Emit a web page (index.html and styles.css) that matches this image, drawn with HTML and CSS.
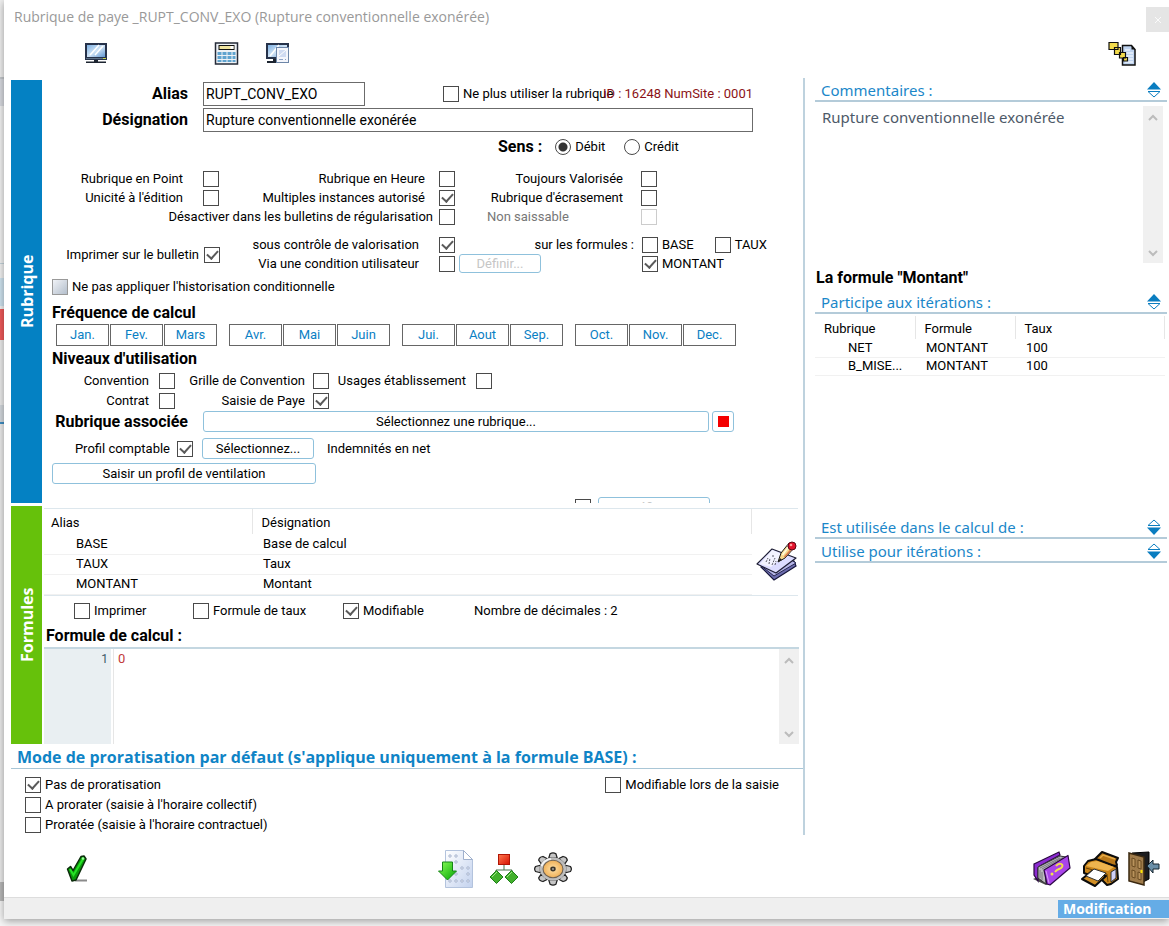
FILE: index.html
```html
<!DOCTYPE html>
<html lang="fr">
<head>
<meta charset="utf-8">
<title>Rubrique de paye</title>
<link rel="stylesheet" href="styles.css">
</head>
<body>
<div class="backdrop"></div>
<div class="window">
  <header class="titlebar">
    <h1 class="title">Rubrique de paye _RUPT_CONV_EXO (Rupture conventionnelle exonérée)</h1>
    <button class="close" type="button" aria-label="Fermer"><svg width="8" height="8" viewBox="0 0 8 8"><path d="M1 1l6 6M7 1l-6 6" stroke="#fafafa" fill="none"/></svg></button>
  </header>

  <nav class="toolbar">
    <button class="icon" type="button" aria-label="Écran">
      <svg width="24" height="22" viewBox="0 0 24 22"><defs><linearGradient id="scr" x1="0" y1="0" x2="1" y2="1"><stop offset="0" stop-color="#7fb2e4"/><stop offset=".5" stop-color="#cfe3f6"/><stop offset="1" stop-color="#5f95d0"/></linearGradient></defs><rect x="1" y="1" width="22" height="17" fill="#26324a"/><rect x="3" y="3" width="18" height="12" fill="url(#scr)"/><path d="M6 13l9-10M11 13l8-9" stroke="#fff" stroke-width="1.5"/><path d="M2 16.500h17" stroke="#5d7186"/><rect x="19" y="16" width="3" height="1" fill="#c5d64a"/><path d="M10 18h4v1.500h-4zM2 19.500h20v1.500H2z" fill="#1c2430"/></svg>
    </button>
    <button class="icon icon-calc" type="button" aria-label="Calculatrice">
      <svg width="25" height="23" viewBox="0 0 24 23"><rect x="1" y="1" width="22" height="21" fill="#eef2f6" stroke="#252b38" stroke-width="1.500"/><rect x="4.500" y="3.500" width="15" height="4" fill="#f0e6a0" stroke="#111"/><rect x="16" y="4" width="3" height="3" fill="#fff"/><g fill="#5fa3cf"><path d="M3 10h4v3H3zM8 10h4v3H8zM13 10h4v3h-4zM18 10h3v3h-3zM3 14h4v3H3zM8 14h4v3H8zM13 14h4v3h-4zM18 14h3v3h-3zM3 18h4v2H3zM8 18h4v2H8zM13 18h4v2h-4zM18 18h3v2h-3z"/></g></svg>
    </button>
    <button class="icon" type="button" aria-label="Aperçu">
      <svg width="25" height="22" viewBox="0 0 25 22"><rect x="1" y="1" width="23" height="16" fill="#26324a"/><rect x="3" y="3" width="19" height="12" fill="url(#scr)"/><path d="M5 14l9-11" stroke="#fff" stroke-width="1.500"/><path d="M8 17h4v2H8zM2 19h10v2H2z" fill="#1c2430"/><rect x="11.500" y="5.500" width="12" height="15" fill="#f4f6fc" stroke="#6d86a8"/><path d="M14 8h7v7h-7z" fill="#cfdbf2"/><path d="M14 14l7-6" stroke="#fff"/><path d="M14 17.500h4M20 17.500h1" stroke="#8ea4c8"/></svg>
    </button>
    <button class="icon icon-end" type="button" aria-label="Dépendances">
      <svg width="28" height="25" viewBox="0 0 28 25"><path d="M14.500 4.500h9l3.500 4v15.500h-12.500z" fill="#bfd3ef" stroke="#111" stroke-width="1.500"/><path d="M23.500 4.500v4h4z" fill="#111"/><path d="M17 9h5M17 12h8M17 15h8M17 18h8M17 21h8" stroke="#eaf2fc" stroke-width="1.500"/><g fill="#f4dc4c" stroke="#111" stroke-width="1.200"><path d="M1 1.500h9v7H1zM6.500 6.500h6v7h-6zM11.500 11.500h6v5.500h-6zM15.500 16.500h4v3.500h-4z"/></g></svg>
    </button>
  </nav>

  <main class="main">
    <div class="left">
      <section class="section section-rubrique">
        <h2 class="tab tab-blue">Rubrique</h2>
        <form class="panel">
          <div class="field">
            <label class="caption" for="alias">Alias</label>
            <div class="field-body">
              <input class="text text-short" id="alias" value="RUPT_CONV_EXO">
              <label class="choice choice-retire"><input class="check" type="checkbox">Ne plus utiliser la rubrique</label>
              <span class="ident">ID : 16248 NumSite : 0001</span>
            </div>
          </div>
          <div class="field">
            <label class="caption" for="designation">Désignation</label>
            <div class="field-body"><input class="text" id="designation" value="Rupture conventionnelle exonérée"></div>
          </div>
          <div class="sens" role="radiogroup" aria-labelledby="sens">
            <span class="bold" id="sens">Sens :</span>
            <label class="choice"><input class="radio" type="radio" name="sens" checked>Débit</label>
            <label class="choice choice-credit"><input class="radio" type="radio" name="sens">Crédit</label>
          </div>

          <div class="options">
            <label for="c1">Rubrique en Point</label><input class="check" id="c1" type="checkbox">
            <label for="c2">Rubrique en Heure</label><input class="check" id="c2" type="checkbox">
            <label for="c3">Toujours Valorisée</label><input class="check" id="c3" type="checkbox">
            <label for="c4">Unicité à l'édition</label><input class="check" id="c4" type="checkbox">
            <label for="c5">Multiples instances autorisé</label><input class="check" id="c5" type="checkbox" checked>
            <label for="c6">Rubrique d'écrasement</label><input class="check" id="c6" type="checkbox">
            <label class="choice wide">Désactiver dans les bulletins de régularisation<input class="check" type="checkbox"></label>
            <label class="muted" for="c8">Non saissable</label><input class="check" id="c8" type="checkbox" disabled>
          </div>

          <div class="printing">
            <label class="choice print-main">Imprimer sur le bulletin<input class="check" type="checkbox" checked></label>
            <label class="end" for="p1">sous contrôle de valorisation</label><input class="check" id="p1" type="checkbox" checked>
            <span class="end">sur les formules :</span>
            <div class="formulas">
              <label class="choice"><input class="check" type="checkbox">BASE</label>
              <label class="choice"><input class="check" type="checkbox">TAUX</label>
            </div>
            <label class="end" for="p2">Via une condition utilisateur</label><input class="check" id="p2" type="checkbox">
            <button class="btn btn-define" type="button" disabled>Définir...</button>
            <label class="choice formulas"><input class="check" type="checkbox" checked>MONTANT</label>
          </div>

          <label class="choice history"><input class="check check-mixed" type="checkbox">Ne pas appliquer l'historisation conditionnelle</label>

          <h3 class="heading">Fréquence de calcul</h3>
          <div class="months">
            <div class="quarter"><button class="month" type="button">Jan.</button><button class="month" type="button">Fev.</button><button class="month" type="button">Mars</button></div>
            <div class="quarter"><button class="month" type="button">Avr.</button><button class="month" type="button">Mai</button><button class="month" type="button">Juin</button></div>
            <div class="quarter"><button class="month" type="button">Jui.</button><button class="month" type="button">Aout</button><button class="month" type="button">Sep.</button></div>
            <div class="quarter"><button class="month" type="button">Oct.</button><button class="month" type="button">Nov.</button><button class="month" type="button">Dec.</button></div>
          </div>

          <h3 class="heading">Niveaux d'utilisation</h3>
          <div class="levels">
            <label for="n1">Convention</label><input class="check" id="n1" type="checkbox">
            <label for="n2">Grille de Convention</label><input class="check" id="n2" type="checkbox">
            <label for="n3">Usages établissement</label><input class="check" id="n3" type="checkbox">
            <label for="n4">Contrat</label><input class="check" id="n4" type="checkbox">
            <label for="n5">Saisie de Paye</label><input class="check" id="n5" type="checkbox" checked>
          </div>

          <div class="field">
            <span class="caption">Rubrique associée</span>
            <div class="field-body linked">
              <button class="btn btn-fill" type="button">Sélectionnez une rubrique...</button>
              <button class="btn btn-stop" type="button" aria-label="Effacer"><span class="stop"></span></button>
            </div>
          </div>
          <div class="profile">
            <label class="choice profile-label">Profil comptable<input class="check" type="checkbox" checked></label>
            <button class="btn btn-select" type="button">Sélectionnez...</button>
            <span>Indemnités en net</span>
          </div>
          <button class="btn btn-split" type="button">Saisir un profil de ventilation</button>
          <div class="cutoff">
            <input class="check" type="checkbox" aria-label="Condition">
            <button class="btn btn-select" type="button" disabled>Définir...</button>
          </div>
        </form>
      </section>

      <section class="section section-formules">
        <h2 class="tab tab-green">Formules</h2>
        <div class="panel">
          <div class="formula-list">
            <table class="grid grid-formulas">
              <thead><tr><th>Alias</th><th>Désignation</th></tr></thead>
              <tbody>
                <tr><td>BASE</td><td>Base de calcul</td></tr>
                <tr><td>TAUX</td><td>Taux</td></tr>
                <tr><td>MONTANT</td><td>Montant</td></tr>
              </tbody>
            </table>
            <button class="icon" type="button" aria-label="Modifier la formule">
              <svg width="42" height="40" viewBox="0 0 42 40"><path d="M5 26l13 13 22-14-2-5-22-3z" fill="#6c6cae" stroke="#16163a" stroke-width="1.200"/><path d="M4 24l14 11 22-13-14-9z" fill="#b4b4e6" stroke="#26264e"/><path d="M1 23L16 8l24 9-20 15z" fill="#dcdcff" stroke="#1d1d33" stroke-width="1.200" stroke-linejoin="round"/><path d="M16 9l12 5-13 12-11-3z" fill="#f3f3ff"/><path d="M10 21l2-4M13 23l1-6M16 24l3-7M19 24l1-4M16 15l2 0" stroke="#5b5b66" stroke-dasharray="2 1"/><path d="M22 21l3-9L33 2l5 5-9 10z" fill="#f6d78c" stroke="#1a1a1a"/><path d="M26.500 14L34 4" stroke="#fffbe0" stroke-width="1.500"/><path d="M28.500 16l8-9" stroke="#d9774a" stroke-width="1.500"/><path d="M22 21l2-4 2 2z" fill="#222"/><path d="M31 4l5 5" stroke="#9a9a9a" stroke-width="2"/><circle cx="36" cy="5" r="4" fill="#e2132c" stroke="#5d0613"/><circle cx="35" cy="4" r="1.300" fill="#ff9d9d"/></svg>
            </button>
          </div>
          <div class="flags">
            <label class="choice"><input class="check" type="checkbox">Imprimer</label>
            <label class="choice"><input class="check" type="checkbox">Formule de taux</label>
            <label class="choice"><input class="check" type="checkbox" checked>Modifiable</label>
            <span>Nombre de décimales : 2</span>
          </div>
          <label class="bold formula-title" for="formule">Formule de calcul :</label>
          <div class="editor">
            <div class="gutter">1</div>
            <textarea class="code" id="formule">0</textarea>
            <div class="scroll"><svg width="10" height="7" viewBox="0 0 10 7"><path d="M1 6l4-4 4 4" fill="none" stroke="#bcbcbc" stroke-width="2"/></svg><svg width="10" height="7" viewBox="0 0 10 7"><path d="M1 1l4 4 4-4" fill="none" stroke="#bcbcbc" stroke-width="2"/></svg></div>
          </div>
        </div>
      </section>

      <section class="prorata">
        <h2 class="prorata-title">Mode de proratisation par défaut (s'applique uniquement à la formule BASE) :</h2>
        <div class="prorata-body">
          <div class="prorata-list">
            <label class="choice"><input class="check" type="checkbox" checked>Pas de proratisation</label>
            <label class="choice"><input class="check" type="checkbox">A prorater (saisie à l'horaire collectif)</label>
            <label class="choice"><input class="check" type="checkbox">Proratée (saisie à l'horaire contractuel)</label>
          </div>
          <label class="choice prorata-edit"><input class="check" type="checkbox">Modifiable lors de la saisie</label>
        </div>
      </section>
    </div>

    <aside class="right">
      <h2 class="fold"><label for="comment">Commentaires :</label>
        <svg width="16" height="18" viewBox="0 0 16 18"><path d="M1 8.500L8 1l7 7.500z" fill="#0a7dc0"/><path d="M2 10.500h12L8 16z" fill="#fff" stroke="#0a7dc0"/></svg></h2>
      <div class="comment">
        <textarea class="comment-text" id="comment">Rupture conventionnelle exonérée</textarea>
        <div class="scroll"><svg width="10" height="7" viewBox="0 0 10 7"><path d="M1 6l4-4 4 4" fill="none" stroke="#bcbcbc" stroke-width="2"/></svg><svg width="10" height="7" viewBox="0 0 10 7"><path d="M1 1l4 4 4-4" fill="none" stroke="#bcbcbc" stroke-width="2"/></svg></div>
      </div>
      <p class="bold which">La formule "Montant"</p>
      <h2 class="fold"><span>Participe aux itérations :</span>
        <svg width="16" height="18" viewBox="0 0 16 18"><path d="M1 8.500L8 1l7 7.500z" fill="#0a7dc0"/><path d="M2 10.500h12L8 16z" fill="#fff" stroke="#0a7dc0"/></svg></h2>
      <div class="iterations">
        <table class="grid grid-iter">
          <thead><tr><th>Rubrique</th><th>Formule</th><th>Taux</th></tr></thead>
          <tbody>
            <tr><td>NET</td><td>MONTANT</td><td>100</td></tr>
            <tr><td>B_MISE...</td><td>MONTANT</td><td>100</td></tr>
          </tbody>
        </table>
      </div>
      <h2 class="fold"><span>Est utilisée dans le calcul de :</span>
        <svg width="16" height="18" viewBox="0 0 16 18"><path d="M2 7.500h12L8 2z" fill="#fff" stroke="#0a7dc0"/><path d="M1 9.500h14L8 17z" fill="#0a7dc0"/></svg></h2>
      <h2 class="fold"><span>Utilise pour itérations :</span>
        <svg width="16" height="18" viewBox="0 0 16 18"><path d="M2 7.500h12L8 2z" fill="#fff" stroke="#0a7dc0"/><path d="M1 9.500h14L8 17z" fill="#0a7dc0"/></svg></h2>
    </aside>
  </main>

  <div class="actions">
    <button class="icon" type="button" aria-label="Valider">
      <svg width="22" height="28" viewBox="0 0 22 28"><path d="M9 24.500h12v2H9z" fill="#8b8b8b"/><path d="M1.500 14l3-2.500 2.500 4 8-14 3-.5 2 3-10 21-4 1z" fill="#0a9a0a" stroke="#0b2d0b" stroke-width="1.500" stroke-linejoin="round"/><path d="M4 14l3.500 6L17 4" fill="none" stroke="#27e227" stroke-width="2"/><circle cx="17" cy="3.500" r="1.300" fill="#9dff9d"/></svg>
    </button>
    <div class="action-group action-mid">
      <button class="icon" type="button" aria-label="Importer">
        <svg width="36" height="38" viewBox="0 0 36 38"><defs><linearGradient id="pg" x1="0" y1="0" x2="1" y2="1"><stop offset="0" stop-color="#fff"/><stop offset="1" stop-color="#c3d2ee"/></linearGradient><linearGradient id="gr" x1="0" y1="0" x2="1" y2="1"><stop offset="0" stop-color="#8cff5a"/><stop offset="1" stop-color="#00a400"/></linearGradient></defs><path d="M7.500 .5h18l9 9v28h-27z" fill="url(#pg)" stroke="#b3c3dd"/><path d="M25.500 .5v9h9z" fill="#fff" stroke="#9fb0cd"/><g fill="#fff" stroke="#8fa0c0" stroke-width=".8"><circle cx="12" cy="6" r="1.200"/><circle cx="18" cy="6" r="1.200"/><circle cx="18" cy="12" r="1.200"/><circle cx="24" cy="18" r="1.200"/><circle cx="30" cy="18" r="1.200"/><circle cx="18" cy="24" r="1.200"/><circle cx="30" cy="24" r="1.200"/><circle cx="12" cy="31" r="1.200"/><circle cx="18" cy="31" r="1.200"/><circle cx="24" cy="31" r="1.200"/><circle cx="30" cy="31" r="1.200"/></g><path d="M4.500 12h10v9h4L9.500 30 .5 21h4z" fill="url(#gr)" stroke="#168516"/></svg>
      </button>
      <button class="icon" type="button" aria-label="Arborescence">
        <svg width="30" height="32" viewBox="0 0 30 32"><defs><linearGradient id="rd" x1="0" y1="0" x2="1" y2="1"><stop offset="0" stop-color="#ff7a50"/><stop offset="1" stop-color="#d81000"/></linearGradient></defs><path d="M15 11v6M7 22v-5h16v5" fill="none" stroke="#49734c"/><rect x="9.500" y="1.500" width="11" height="10" fill="url(#rd)" stroke="#b01505"/><path d="M7.500 17.500L14 24l-6.500 6.500L1 24zM22.500 17.500L29 24l-6.500 6.500L16 24z" fill="#42b02c" stroke="#1d7d18"/><path d="M3 24l5-5M18 24l5-5" stroke="#9be583"/></svg>
      </button>
      <button class="icon" type="button" aria-label="Paramètres">
        <svg width="38" height="34" viewBox="0 0 38 34"><defs><radialGradient id="or"><stop offset="0" stop-color="#ffe2a8"/><stop offset="1" stop-color="#f0b058"/></radialGradient><path id="tooth" d="M-4 -12l1.200 -4.500q2.800 -2 5.600 0l1.200 4.500z"/></defs><g transform="translate(19 17) scale(1.050 .92)"><g fill="#c6c6c6" stroke="#222" stroke-width="1.200"><use href="#tooth"/><use href="#tooth" transform="rotate(45)"/><use href="#tooth" transform="rotate(90)"/><use href="#tooth" transform="rotate(135)"/><use href="#tooth" transform="rotate(180)"/><use href="#tooth" transform="rotate(225)"/><use href="#tooth" transform="rotate(270)"/><use href="#tooth" transform="rotate(315)"/></g><circle r="12.500" fill="#bdbdbd"/><path d="M-11 -3a11.500 11.500 0 0 1 9 -8" fill="none" stroke="#f4f4f4" stroke-width="2"/><circle r="9.500" fill="url(#or)" stroke="#6f6253"/><circle r="2.600" fill="#3d362b"/><circle r=".8" fill="#eee"/></g></svg>
      </button>
    </div>
    <div class="action-group action-end">
      <button class="icon" type="button" aria-label="Aide">
        <svg width="40" height="36" viewBox="0 0 40 36"><path d="M1 28l7-3 9 8-3 1z" fill="#4a4a4a"/><path d="M2 13L27 1l1 3-20 11-2 2v13L2 24z" fill="#8b2bd0" stroke="#29073f" stroke-width="1.200"/><path d="M6 16L28 5l6 1-21 13 1 14-8-6z" fill="#b9b9bd" stroke="#333"/><path d="M8 17l20-10M10 18L31 6.500M8 19v8M10 21v8" stroke="#7a7a80"/><path d="M12 19L36 4.500l2 12.500-20 17-3-1z" fill="#a944ea" stroke="#2d0845" stroke-width="1.200" stroke-linejoin="round"/><path d="M14 20l3 12" stroke="#d9a0f7"/><path d="M24 15c3-4 8-2 6 1-2 3-4 1-7 5" fill="none" stroke="#f2e04c" stroke-width="2"/><circle cx="20" cy="23" r="1.500" fill="#f2e04c"/></svg>
      </button>
      <button class="icon" type="button" aria-label="Imprimer">
        <svg width="40" height="38" viewBox="0 0 40 38"><path d="M15 9l7-7 16 6-2 4 1 3-8 2z" fill="#b87718" stroke="#0c0c0c" stroke-width="2" stroke-linejoin="round"/><path d="M20 8l3-3 12 4" fill="none" stroke="#e6ac48" stroke-width="1.500"/><path d="M4 16l4-5 8-2 21 8 1 12-7 5-4 1-5-5-18-7z" fill="#c98318" stroke="#0c0c0c" stroke-width="2" stroke-linejoin="round"/><path d="M6 16l5-4 6-1 17 6-6 4z" fill="#eeb44e"/><path d="M6 18l21 6 1 8" fill="none" stroke="#6a4206"/><path d="M31 22l5-3v9l-5 4z" fill="#cfd0f7" stroke="#333"/><path d="M2 29l10-8 14 5-11 10z" fill="#d28f25" stroke="#0c0c0c" stroke-width="2" stroke-linejoin="round"/><path d="M6 26l8-7 12 4-8 8z" fill="#fff" stroke="#333"/></svg>
      </button>
      <button class="icon" type="button" aria-label="Quitter">
        <svg width="32" height="36" viewBox="0 0 32 36"><path d="M4 2l17-1v27l-6 3z" fill="#1d1d1f" stroke="#000"/><path d="M1 2l15 4v28L1 30z" fill="#a07c4b" stroke="#3a2810" stroke-width="1.500"/><path d="M4 7l3 1v8l-3-1zM10 9l3 1v8l-3-1zM4 19l3 1v7l-3-1zM10 21l3 1v7l-3-1z" fill="#b9935c" stroke="#6b4c22"/><path d="M13.500 19v3" stroke="#ffe600" stroke-width="2"/><path d="M19 15l6-6v4h6v5h-6v4z" fill="#6a8fa8" stroke="#15242e"/></svg>
      </button>
    </div>
  </div>

  <footer class="status"><span class="mode">Modification</span></footer>
</div>
</body>
</html>
```
FILE: styles.css
```css
* { box-sizing: border-box; }
body {
  margin: 0;
  display: flex;
  min-height: 100vh;
  background: #f6f6f6;
  color: #000;
  font: 13px/16px Roboto, "Liberation Sans", sans-serif;
}
button, input, textarea { font: inherit; color: inherit; margin: 0; }
h1, h2, h3, p { margin: 0; font-size: inherit; font-weight: inherit; }

.backdrop {
  width: 4px;
  background: linear-gradient(#f0f0f0 77px, #c4c8cc 77px 79px, #d8dae0 79px 106px, #f2f2f2 106px 263px,
    #c4d4dc 263px 264px, #f2f2f2 264px 278px, #cfe4f0 278px 306px, #f2f2f2 306px 309px, #f05a5a 309px 340px,
    #ececec 340px 405px, #d4d9de 405px 422px, #3f8fc4 422px 424px, #ececec 424px 882px, #b9b9b9 882px 901px, #f6f6f6 901px);
}
.window {
  flex: 1;
  min-width: 0;
  align-self: flex-start;
  background: #fff;
  box-shadow: 0 2px 8px #00000060;
}

.titlebar { display: flex; justify-content: space-between; padding: 7px 0 0 10px; height: 34px; }
.title { font: 14px/20px "Open Sans", "Noto Sans", sans-serif; color: #999; }
.close { width: 23px; height: 25px; padding: 0; border: 0; background: #e5e5e5; }
.icon { display: flex; padding: 0; border: 0; background: none; }
.toolbar { display: flex; align-items: center; gap: 26px; height: 44px; padding: 0 33px 6px 80px; }
.icon-calc { margin-left: 80px; }
.icon-end { margin-left: auto; }

.main { display: grid; grid-template-columns: minmax(0, 1fr) 364px; padding-left: 7px; }
.left { border-right: 2px solid #bed2de; }

.section { display: flex; }
.section-rubrique { padding-top: 2px; }
.section-formules { margin-top: 3px; }
.tab {
  display: flex;
  align-items: center;
  justify-content: center;
  width: 31px;
  color: #fff;
  font: bold 16px/20px "Open Sans", "Noto Sans", sans-serif;
  writing-mode: vertical-rl;
  transform: rotate(180deg);
}
.tab-blue { background: #0481c3; }
.tab-green { background: #66c10b; }
.panel { flex: 1; min-width: 0; }
.bold, .caption, .heading { font-size: 16px; font-weight: bold; }

.field { display: flex; align-items: center; gap: 15px; margin: 2px 50px 0 0; }
.caption { width: 146px; text-align: right; }
.field-body { display: flex; flex: 1; align-items: center; position: relative; }
.text { width: 100%; height: 24px; padding: 0 2px; border: 1px solid #6b6b6b; background: #fff; font-size: 14px; }
.text-short { width: 162px; }
.choice { display: flex; align-items: center; gap: 4px; }
.choice-retire { margin-left: 78px; }
.ident { position: absolute; right: 0; color: #8b1216; }

.check, .radio {
  appearance: none;
  flex: none;
  position: relative;
  width: 16px;
  height: 16px;
  border: 1px solid #4a4a4a;
  background: #fff;
}
.check:checked::after {
  content: "";
  position: absolute;
  left: 4px;
  top: 0;
  width: 5px;
  height: 9px;
  border: solid #5a5a5a;
  border-width: 0 2px 2px 0;
  transform: rotate(42deg);
}
.check:disabled { border-color: #ccc; }
.check-mixed { border-color: #999; background: linear-gradient(135deg, #f0f2f6, #b4bfcc); }
.radio { border-radius: 50%; }
.radio:checked { background: radial-gradient(#333 4px, #fff 5px); }

.sens { display: flex; align-items: center; gap: 13px; padding: 7px 0 0 456px; }
.choice-credit { margin-left: 6px; }

.options {
  display: grid;
  grid-template-columns: 141px 36px 206px 30px 168px 34px;
  align-items: center;
  justify-items: end;
  row-gap: 3px;
  margin-top: 16px;
}
.wide { grid-column: span 4; gap: 6px; }
.muted { justify-self: start; padding-left: 32px; color: #777; }

.printing {
  display: grid;
  grid-template-columns: 178px 199px 36px 179px 1fr;
  align-items: center;
  row-gap: 1px;
  margin-top: 12px;
}
.printing .check { justify-self: end; }
.print-main { grid-row: span 2; justify-self: end; gap: 5px; }
.end { justify-self: end; }
.formulas { display: flex; gap: 21px; padding-left: 8px; }
.choice.formulas { gap: 4px; }
.btn {
  height: 21px;
  padding: 0 4px;
  border: 1px solid #8fc1dc;
  border-radius: 3px;
  background: #fff;
  line-height: 17px;
}
.btn:disabled { color: #c6c6c6; }
.btn-define { width: 82px; height: 19px; margin-left: 4px; }
.history { margin: 6px 0 0 10px; }

.heading { margin: 9px 0 0 10px; line-height: 17px; }
.months { display: flex; gap: 12px; padding: 3px 0 0 14px; }
.quarter { display: flex; gap: 1px; }
.month { width: 53px; height: 22px; padding: 0; border: 1px solid #666; background: #fff; color: #0a80c4; }
.months + .heading { margin-top: 4px; }

.levels {
  display: grid;
  grid-template-columns: 107px 26px 130px 24px 137px 26px;
  align-items: center;
  justify-items: end;
  row-gap: 4px;
  margin-top: 6px;
}
.levels + .field { margin: 2px 69px 0 0; }
.linked { gap: 3px; }
.btn-fill { flex: 1; }
.btn-stop { display: flex; align-items: center; justify-content: center; width: 22px; }
.stop { width: 11px; height: 11px; background: #f40000; }
.profile { display: flex; align-items: center; margin-top: 6px; }
.profile-label { width: 151px; justify-content: flex-end; gap: 7px; }
.btn-select { width: 112px; }
.profile .btn-select { margin: 0 13px 0 9px; }
.btn-split { display: block; width: 264px; margin: 4px 0 0 10px; }
.cutoff { display: flex; align-items: flex-start; gap: 7px; height: 6px; margin: 13px 0 0 533px; overflow: hidden; }
.cutoff .check { margin-top: 2px; }

.grid { border-collapse: collapse; table-layout: fixed; width: 100%; }
.grid th { height: 25px; padding: 2px 9px 0; border-right: 1px solid #e6e6e6; font-weight: normal; text-align: left; }
.grid td { height: 20px; padding: 0 11px; border-bottom: 1px solid #f1f1f1; }
.formula-list {
  display: grid;
  grid-template-columns: minmax(0, 1fr) 42px;
  align-items: center;
  gap: 4px;
  margin: 2px 5px 0 2px;
  border: solid #dde7ed;
  border-width: 1px 0;
  min-height: 88px;
}
.formula-list .icon { margin-top: 18px; }
.grid-formulas th:first-child { width: 208px; padding-left: 7px; }
.grid-formulas td:first-child { padding-left: 32px; }

.flags { display: flex; align-items: center; padding: 7px 0 0 32px; }
.flags .choice:nth-child(1) { width: 119px; }
.flags .choice:nth-child(2) { width: 150px; }
.flags .choice:nth-child(3) { width: 131px; }
.formula-title { display: block; padding: 9px 0 3px 4px; }
.editor { display: flex; height: 97px; margin: 0 4px 0 2px; border-top: 2px solid #c4d7e1; }
.gutter { width: 67px; padding: 2px 3px 0; background: #e9eff2; color: #3d5866; font-size: 12px; text-align: right; }
.code { flex: 1; margin-left: 2px; padding: 2px 4px; border: 0; border-left: 1px solid #e6e6e6; outline: 0; resize: none; color: #c23a3a; overflow: hidden; }
.scroll { display: flex; flex-direction: column; justify-content: space-between; align-items: center; width: 20px; padding: 8px 0 6px; background: #f0f0f0; }

.prorata-title { padding: 3px 0 0 6px; border-bottom: 1px solid #a9c6d6; color: #0f84c6; font: bold 16px/21px "Open Sans", "Noto Sans", sans-serif; }
.prorata-body { display: flex; justify-content: space-between; align-items: flex-start; padding: 8px 24px 0 14px; min-height: 66px; }
.prorata-list { display: grid; gap: 4px; }

.right { padding: 2px 2px 0 10px; }
.fold {
  display: flex;
  align-items: center;
  justify-content: space-between;
  padding: 0 5px 0 6px;
  border-bottom: 2px solid #b4cbd9;
  color: #1b87c9;
  font: 15px/20px "Noto Sans", "Open Sans", sans-serif;
}
.fold + .fold { padding-top: 2px; }
.comment { display: flex; height: 157px; margin: 4px 4px 0 0; }
.comment-text { flex: 1; padding: 1px 7px; border: 0; outline: 0; resize: none; overflow: hidden; color: #4d5968; font: 15px/20px "Noto Sans", "Open Sans", sans-serif; }
.which { padding: 7px 0 6px 1px; }
.iterations { min-height: 203px; padding: 2px 2px 0 0; }
.grid-iter th { height: 23px; }
.grid-iter td { height: 18px; }
.grid-iter th:nth-child(-n+2) { width: 100px; }
.grid-iter td:first-child { padding: 0 0 0 33px; }

.actions { display: grid; grid-template-columns: 372px 1fr auto; align-items: center; min-height: 62px; padding: 5px 9px 0 62px; }
.action-group { display: flex; align-items: center; }
.action-mid { gap: 15px; }
.action-end { gap: 8px; }
.status { display: flex; justify-content: flex-end; align-items: center; height: 22px; border-top: 1px solid #ddd; background: #efefef; }
.mode { width: 111px; padding: 0 5px; background: #65ace6; color: #fff; font: bold 14px/18px "Open Sans", "Noto Sans", sans-serif; }
```
